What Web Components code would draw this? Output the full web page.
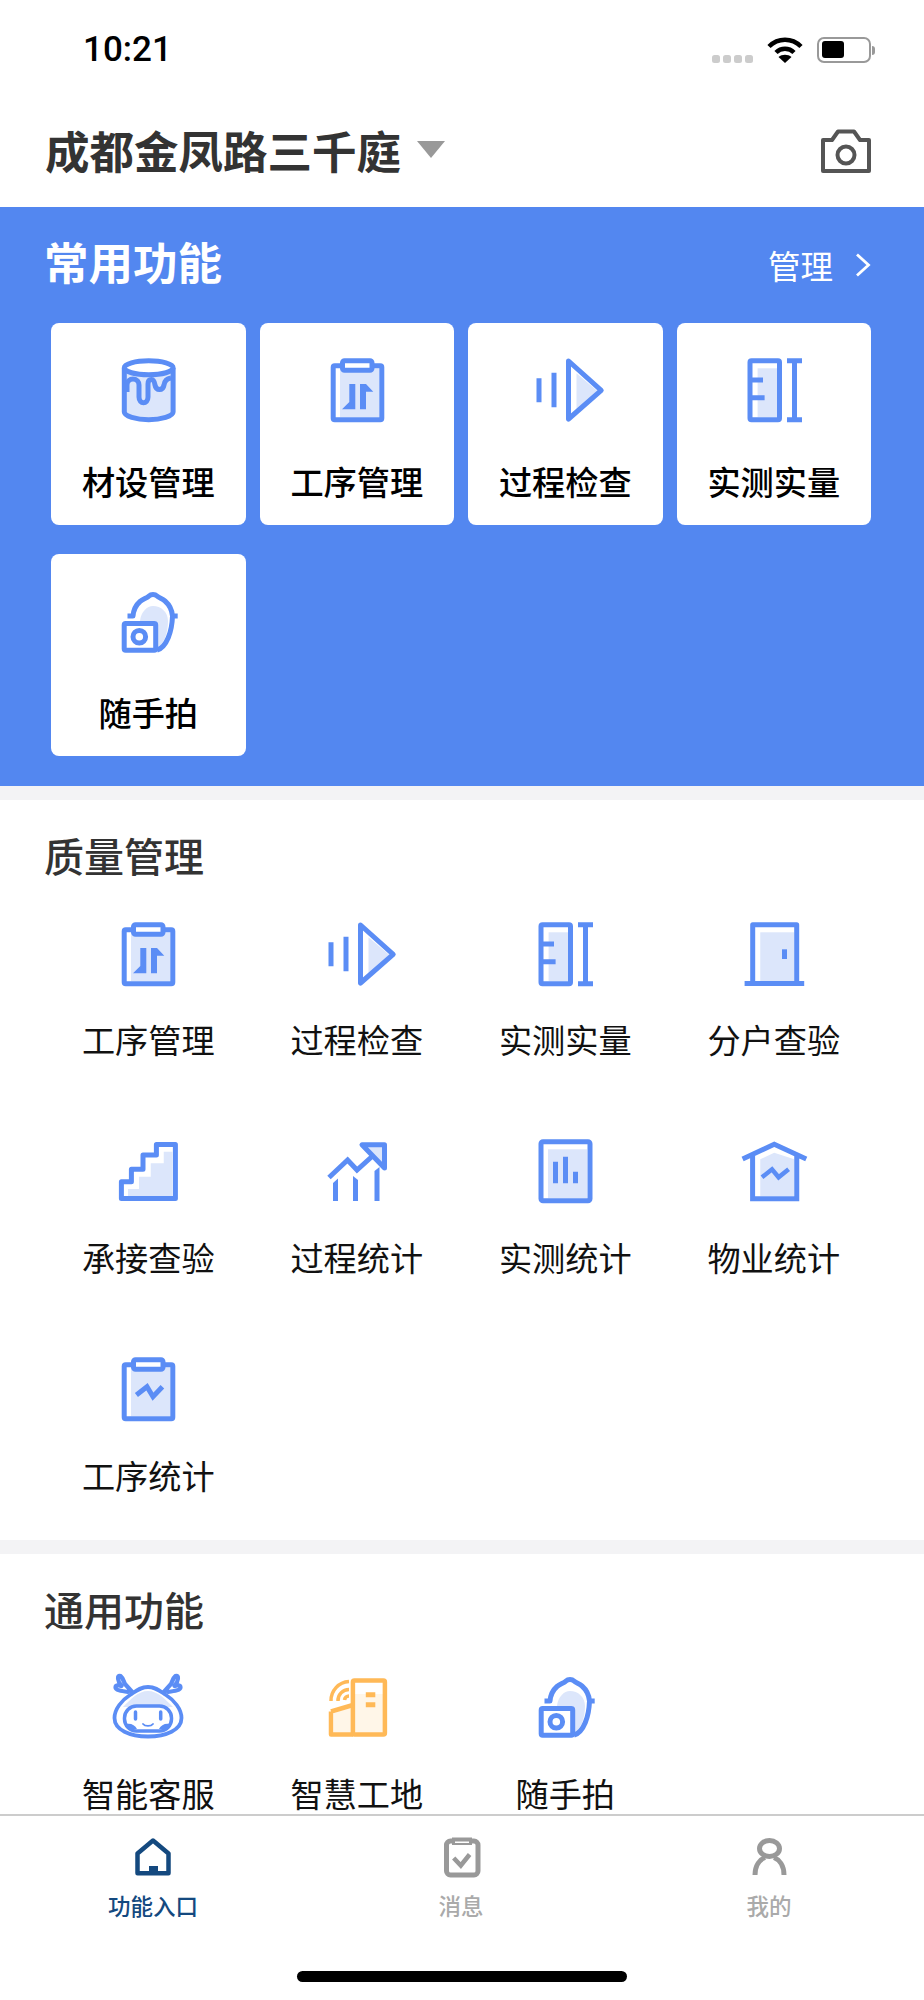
<!DOCTYPE html>
<html lang="zh-CN">
<head>
<meta charset="utf-8">
<title>功能入口</title>
<style>
html,body{margin:0;padding:0;background:#fff}
body{font-family:"Noto Sans CJK SC","Noto Sans",sans-serif;width:924px;height:2000px;overflow:hidden}
</style>
</head>
<body>
<x-app>
  <x-status-bar slot="top"></x-status-bar>
  <x-app-header slot="top" title="成都金凤路三千庭"></x-app-header>
  <x-common-panel heading="常用功能" action="管理">
    <x-func-card icon="paint" label="材设管理"></x-func-card>
    <x-func-card icon="process" label="工序管理"></x-func-card>
    <x-func-card icon="inspect" label="过程检查"></x-func-card>
    <x-func-card icon="measure" label="实测实量"></x-func-card>
    <x-func-card icon="snap" label="随手拍"></x-func-card>
  </x-common-panel>
  <x-section heading="质量管理" grid-gap="35" style="--label-gap:25.5px">
    <x-func-item icon="process" label="工序管理"></x-func-item>
    <x-func-item icon="inspect" label="过程检查"></x-func-item>
    <x-func-item icon="measure" label="实测实量"></x-func-item>
    <x-func-item icon="door" label="分户查验"></x-func-item>
    <x-func-item icon="stairs" label="承接查验"></x-func-item>
    <x-func-item icon="trend" label="过程统计"></x-func-item>
    <x-func-item icon="bars" label="实测统计"></x-func-item>
    <x-func-item icon="house" label="物业统计"></x-func-item>
    <x-func-item icon="clipwave" label="工序统计"></x-func-item>
  </x-section>
  <x-section heading="通用功能" grid-gap="33" style="--label-gap:28px">
    <x-func-item icon="robot" label="智能客服"></x-func-item>
    <x-func-item icon="site" label="智慧工地"></x-func-item>
    <x-func-item icon="snap" label="随手拍"></x-func-item>
  </x-section>
  <x-tab-bar slot="bottom">
    <x-tab icon="home" label="功能入口" active></x-tab>
    <x-tab icon="msg" label="消息"></x-tab>
    <x-tab icon="me" label="我的"></x-tab>
  </x-tab-bar>
</x-app>
<script>
const B='#5B8DF5',L='#DCE6FB',O='#FFB957',OL='#FFF6E8';
const s=`fill="none" stroke="${B}" stroke-width="5" stroke-linejoin="round"`;
const clip=(y=0)=>`<g transform="translate(0 ${y})"><rect x="19" y="14.3" width="39.3" height="49" fill="${L}"/><rect x="12.2" y="11.8" width="48.6" height="54" rx="1.5" ${s}/><rect x="21.5" y="6.8" width="29.5" height="9.5" rx="2" fill="#fff" stroke="${B}" stroke-width="5"/></g>`;
const antler=`<path d="M22 24L13 14C11.500 11 11 8 8.500 6C6 5 5 8 7 12L9.500 16C7 15 3.500 15 3.500 17.500C3.500 20 9 21 16 22" fill="#fff" stroke="${B}" stroke-width="4.200" stroke-linejoin="round" stroke-linecap="round"/>`;
const ICONS={
paint:`<path d="M12.3 14V58C12.3 62 24 65.7 36.7 65.7S61.1 62 61.1 58V14Z" fill="${L}"/><path d="M12.3 14V58C12.3 62 24 65.7 36.7 65.7S61.1 62 61.1 58V14" ${s}/><ellipse cx="36.7" cy="13.8" rx="24.4" ry="7" fill="#fff" stroke="${B}" stroke-width="5"/><path d="M15 38V31C15 27 18 25 21 25C25 25 27 28 27 31V43C27 50.5 36 50.5 36 43V30C36 27 37.500 25.500 39.500 25.500C42 25.500 42.500 28 43 31C44 37 51 37 52 31C52.500 27.500 55 24.500 59 24" ${s}/>`,
process:clip()+`<path fill="${B}" d="M28.3 30H34.3V55.3H21L28.3 48ZM39 30H45L52.3 37.700H45V55.3H39Z"/>`,
inspect:`<g transform="translate(1.500 0)"><path d="M46 19.300L66.700 36.700L46 59.300Z" fill="${L}"/><path d="M38 7L70.700 36.300L38 65Z" ${s}/><path fill="${B}" d="M6 24.300H11V48.300H6ZM21 18.700H26V53.300H21Z"/></g>`,
measure:`<rect x="19.600" y="14.300" width="19.400" height="49" fill="${L}"/><rect x="12" y="6.800" width="29.500" height="59" rx="1.500" ${s}/><path d="M14 26H25M14 43.700H26.600M49 6.800H64M56.500 6.800V65.800M49 65.800H64" ${s}/>`,
door:`<rect x="22.250" y="14.300" width="34" height="49" fill="${L}"/><path d="M14.700 65.500V6.800H58.700V65.500M6.600 65.500H66.200" ${s}/><rect x="44" y="31.300" width="5" height="9.700" fill="${B}"/>`,
stairs:`<path fill="${L}" d="M16 60V53H27V40.700H38.750V27.300H51.750V15.700H60.400V60Z"/><path d="M9.400 62.500V45.700H19.400V33.300H31V19H44.400V8.500H63.400V62.500Z" ${s}/>`,
trend:`<path d="M41 8.800H63.500V32Z" fill="${L}" stroke="${B}" stroke-width="5" stroke-linejoin="round"/><path d="M8 41.500L26.600 24L36 34L51 20.500" fill="none" stroke="${B}" stroke-width="5"/><path fill="${B}" d="M12 47L17 42.500V65H12ZM32 40L37 44V65H32ZM53.500 35L58.500 31V65H53.500Z"/>`,
bars:`<rect x="19" y="13.300" width="39" height="49" fill="${L}"/><rect x="12" y="5.800" width="49" height="59" rx="2" ${s}/><path fill="${B}" d="M24 25.700H29V47.300H24ZM34 20.700H39V47.300H34ZM44 35.700H49V47.300H44Z"/>`,
house:`<path fill="${L}" d="M22.250 23.300L36.250 16.700L56.250 23.300V60H22.250Z"/><path d="M14.600 19V62.800H58.750V19M4.600 23L36.250 8.300L68.250 23" fill="none" stroke="${B}" stroke-width="5"/><path d="M24 41.300L34 33.300L40.600 41.300L50.600 33.300" fill="none" stroke="${B}" stroke-width="4.500"/>`,
clipwave:clip(-1)+`<path d="M24.400 41L35 32.700L41 42.700L50.400 32.700" fill="none" stroke="${B}" stroke-width="5"/>`,
snap:`<path fill="${L}" d="M28 36C29 27 35 21 41 21C49 21 56 27 56 36C56 48 52 60 44 63V36Z"/><path d="M15.500 31H21C21.500 25 24 20 28 16.500C31 14 35 13 37 11C39 9 43 9 45 11C47 13 50 13.500 53 16C57 19.500 60 25 60.500 31H65.700M60.500 31C60 46 55 62 45 65.200" ${s}/><rect x="12.200" y="38.500" width="31.500" height="26.700" rx="1.500" fill="#fff" stroke="${B}" stroke-width="5" stroke-linejoin="round"/><circle cx="27.300" cy="51.700" r="6.300" fill="none" stroke="${B}" stroke-width="5"/>`,
robot:antler+`<g transform="matrix(-1 0 0 1 72 0)">${antler}</g><path d="M36 17C28 17 24 21 18 25C10 30 2.500 39 2.500 48C2.500 60 18 66.500 36 66.500S69.500 60 69.500 48C69.500 39 62 30 54 25C48 21 44 17 36 17Z" fill="#fff" stroke="${B}" stroke-width="3.800"/><path d="M36 21C26 21 19 29 11 37H61C53 29 46 21 36 21Z" fill="${L}"/><rect x="12.500" y="36" width="47" height="25" rx="12" fill="#fff" stroke="${B}" stroke-width="3.500"/><path d="M14 54C19 53 23 55 25 59H16ZM58 54C53 53 49 55 47 59H56Z" fill="${B}"/><path d="M23.500 42V49M48.700 42V49" stroke="${B}" stroke-width="3.500" stroke-linecap="round"/><path d="M31 54C33 56.500 39 56.500 41 54" fill="none" stroke="${B}" stroke-width="1.800" stroke-linecap="round"/>`,
site:`<rect x="34" y="24" width="30" height="40" fill="${OL}"/><path d="M13 43L30 38V63H13Z" fill="${OL}"/><rect x="31.900" y="10.400" width="32" height="54" rx="1.500" fill="none" stroke="${O}" stroke-width="4.500" stroke-linejoin="round"/><path d="M10 41.500L32 35M10 41.500V64.400H32" fill="none" stroke="${O}" stroke-width="4.500" stroke-linejoin="round"/><path d="M10 31A19 19 0 0 1 28 11.500M17 31A11 11 0 0 1 28 19.500M23.500 30A4.500 4.500 0 0 1 28 26" fill="none" stroke="${O}" stroke-width="3.500"/><path d="M44.800 22.300H54.300V27.300H44.800ZM44.800 32.300H54.300V37.300H44.800Z" fill="${O}"/>`,
home:`<path d="M22 4.500L6.500 17.500V37.300H37.500V17.500Z" fill="none" stroke="#14497F" stroke-width="4.500" stroke-linejoin="round"/><rect x="18" y="30" width="9" height="9" fill="#14497F"/>`,
msg:`<rect x="7.500" y="5" width="31.500" height="34" rx="4" fill="none" stroke="#999" stroke-width="5"/><path d="M13 1.500H33V9H13Z" fill="#999"/><path d="M16 5.500H30V7H16Z" fill="#fff"/><path d="M14.700 22L21.800 29.500L30.600 18.500" fill="none" stroke="#999" stroke-width="4.500"/>`,
me:`<ellipse cx="22.500" cy="12.500" rx="10" ry="8" fill="none" stroke="#999" stroke-width="5"/><path d="M8 39C8 29 13 23.500 18 21.500M37 39C37 29 32 23.500 27 21.500" fill="none" stroke="#999" stroke-width="5"/>`
};
function def(name,css,html,init){
  customElements.define(name,class extends HTMLElement{
    connectedCallback(){
      if(this.shadowRoot)return;
      const r=this.attachShadow({mode:'open'});
      r.innerHTML=`<style>${css}</style>${typeof html==='function'?html(this):html}`;
      init&&init(this,r);
    }
  });
}
const A=(e,n)=>e.getAttribute(n)||'';
def('x-icon',':host{display:block;flex:none;line-height:0}svg{display:block;overflow:visible}',
  e=>{const z=A(e,'size')||72;return `<svg width="${z}" height="${z}" viewBox="0 0 ${z} ${z}" aria-hidden="true">${ICONS[A(e,'name')]||''}</svg>`});
def('x-app',':host{display:flex;flex-direction:column;width:924px;height:2000px;background:#fff}.m{flex:1;min-height:0;overflow:hidden;display:flex;flex-direction:column;gap:14px;background:#f3f3f5}::slotted(*){flex:none}',
  '<slot name="top"></slot><div class="m"><slot></slot></div><slot name="bottom"></slot>');
def('x-status-bar',':host{display:flex;align-items:flex-start;height:88px;padding:0 49px 0 83px;box-sizing:border-box;background:#fff}.t{font:500 35px/34px Roboto,"Liberation Sans",sans-serif;color:#000;margin-top:33px;flex:1}.d{display:flex;gap:3px;margin:55px 14px 0 0}.d i{width:8px;height:8px;border-radius:2.500px;background:#ccc}svg{display:block;margin-top:37px}.b{display:flex;align-items:center;margin:37px 0 0 14px}.c{width:54px;height:26px;box-sizing:border-box;border:2.500px solid #999;border-radius:7px;padding:2px 3px}.c i{display:block;width:22px;height:17px;background:#000;border-radius:3px}.n{width:3px;height:9px;background:#999;border-radius:0 3px 3px 0;margin-left:1px}',
  `<div class="t">10:21</div><div class="d"><i></i><i></i><i></i><i></i></div><svg width="36" height="26" viewBox="0 0 36 26"><path d="M2 9.500C11 .5 25 .5 34 9.500M9 15.500C14 10.500 22 10.500 27 15.500" fill="none" stroke="#000" stroke-width="4.500"/><path d="M18 26L11.500 20C15 17 21 17 24.500 20Z"/></svg><div class="b"><div class="c"><i></i></div><div class="n"></div></div>`);
def('x-app-header',':host{display:flex;align-items:center;height:119px;padding:4px 53px 0 45px;box-sizing:border-box;background:#fff}h1{margin:0;font:600 44.500px/60px "Noto Sans CJK SC",sans-serif;color:#333}.caret{width:0;height:0;border:14px solid transparent;border-top:17px solid #999;border-bottom:0;margin:0 0 0 16px}svg{display:block;margin-left:auto;margin-top:2px}',
  e=>`<h1>${A(e,'title')}</h1><div class="caret"></div><svg width="50" height="44" viewBox="0 0 50 44"><path d="M2 42V11H11L17 2.500H33L39 11H48V42Z" fill="none" stroke="#555" stroke-width="4" stroke-linejoin="round"/><circle cx="25" cy="26" r="8.500" fill="none" stroke="#555" stroke-width="4"/></svg>`);
def('x-common-panel',':host{display:block;background:#5387F0;color:#fff;padding-bottom:30px}.h{display:flex;align-items:center;height:116px;padding:0 53px 0 44px;box-sizing:border-box}h2{margin:0 auto 0 0;font:700 44.500px/60px "Noto Sans CJK SC",sans-serif;position:relative;top:-4px}.a{font:400 32.500px/44px "Noto Sans CJK SC",sans-serif}svg{display:block;margin-left:22px}.g{display:grid;grid-template-columns:repeat(4,1fr);gap:29px 14px;padding:0 53px 0 51px}',
  e=>`<div class="h"><h2>${A(e,'heading')}</h2><span class="a">${A(e,'action')}</span><svg width="16" height="24" viewBox="0 0 16 24"><path d="M2 1.500L13.500 12L2 22.500" fill="none" stroke="#fff" stroke-width="2.800"/></svg></div><div class="g"><slot></slot></div>`);
def('x-func-card',':host{display:flex;flex-direction:column;align-items:center;height:202px;background:#fff;border-radius:8px;padding-top:31px;box-sizing:border-box}.l{margin-top:32px;font:500 33.200px/46px "Noto Sans CJK SC",sans-serif;color:#000}',
  e=>`<x-icon name="${A(e,'icon')}"></x-icon><div class="l">${A(e,'label')}</div>`);
def('x-section',':host{display:block;background:#fff;flex:none;padding:27px 53px 40px 0;box-sizing:border-box}h2{margin:0 0 0 44px;font:500 40px/56px "Noto Sans CJK SC",sans-serif;color:#333}.g{display:grid;grid-template-columns:repeat(4,1fr);gap:72px 14px;padding-left:51px}',
  e=>`<h2>${A(e,'heading')}</h2><div class="g" style="margin-top:${A(e,'grid-gap')}px"><slot></slot></div>`);
def('x-func-item',':host{display:flex;flex-direction:column;align-items:center;height:146px}.l{margin-top:var(--label-gap,28px);font:400 33.200px/46px "Noto Sans CJK SC",sans-serif;color:#111;white-space:nowrap}',
  e=>`<x-icon name="${A(e,'icon')}"></x-icon><div class="l">${A(e,'label')}</div>`);
def('x-tab-bar',':host{display:block;height:186px;box-sizing:border-box;border-top:2px solid #ccc;background:#fff}.t{display:flex;padding:20px 1px 0 0;margin-left:-1px}.i{width:330px;height:11px;background:#000;border-radius:6px;margin:51.500px auto 0}',
  '<div class="t"><slot></slot></div><div class="i"></div>');
def('x-tab',':host{display:flex;flex:1;flex-direction:column;align-items:center;color:#aaa}:host([active]){color:#14497F}.l{margin-top:9.500px;font:500 22.500px/30px "Noto Sans CJK SC",sans-serif}',
  e=>`<x-icon name="${A(e,'icon')}" size="44"></x-icon><div class="l">${A(e,'label')}</div>`);
</script>
</body>
</html>
